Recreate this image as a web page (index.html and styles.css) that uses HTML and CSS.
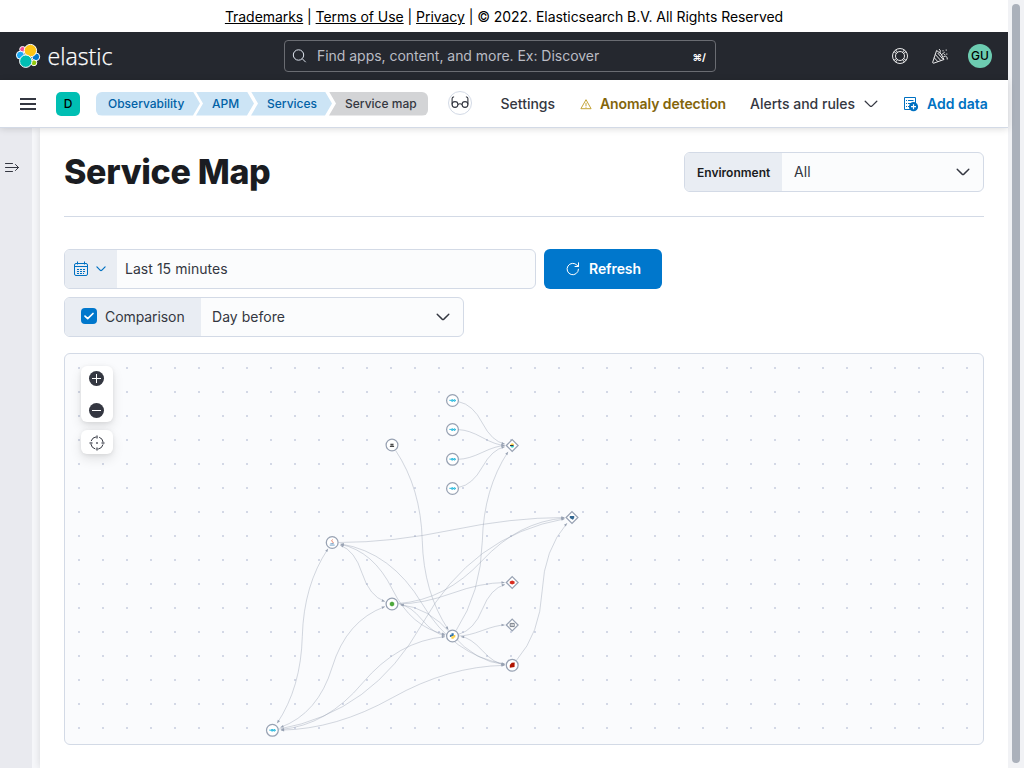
FILE: index.html
```html
<!DOCTYPE html>
<html lang="en">
<head>
<meta charset="utf-8">
<title>Service Map - APM</title>
<link rel="stylesheet" href="styles.css">
</head>
<body>
<div class="app">
  <div class="legal"><a>Trademarks</a> | <a>Terms of Use</a> | <a>Privacy</a> | © 2022. Elasticsearch B.V. All Rights Reserved</div>

  <header class="header">
    <svg class="brand" width="100" height="26" viewBox="0 0 100 26">
      <g stroke="#fff" stroke-width="1">
        <circle cx="6.6" cy="6.4" r="2.9" fill="#f04e98"/>
        <circle cx="4.4" cy="12.2" r="4" fill="#1ba9f5"/>
        <circle cx="19.8" cy="13.8" r="3.9" fill="#0077cc"/>
        <circle cx="17.9" cy="19.8" r="2.9" fill="#93c90e"/>
        <circle cx="14.4" cy="7.6" r="6.2" fill="#fec514"/>
        <circle cx="9.800" cy="18.2" r="6.2" fill="#00bfb3"/>
      </g>
      <text class="wordmark" x="31.500" y="21.500" textLength="65" lengthAdjust="spacingAndGlyphs">elastic</text>
    </svg>
    <div class="search">
      <svg width="16" height="16" viewBox="0 0 16 16" fill="none" stroke="#dfe5ef" stroke-width="1"><circle cx="6.500" cy="7" r="5.200"/><path d="M10.200 10.700l3.500 3.500"/></svg>
      <span class="search-text">Find apps, content, and more. Ex: Discover</span>
      <kbd>⌘/</kbd>
    </div>
    <div class="header-icons">
      <svg width="16" height="16" viewBox="0 0 16 16" fill="none" stroke="#fff" stroke-width=".9"><circle cx="8" cy="8" r="7.500"/><circle cx="8" cy="8" r="4.500"/><path d="M3.600 1.900l1.800 2.500M1.900 3.600l2.500 1.800M12.400 1.900l-1.800 2.500M14.100 3.600l-2.500 1.800M3.600 14.100l1.800-2.500M1.900 12.400l2.500-1.800M12.400 14.100l-1.800-2.500M14.100 12.400l-2.500-1.800"/></svg>
      <svg width="16" height="16" viewBox="0 0 16 16" fill="none" stroke="#fff" stroke-width=".9"><path d="M4.600 2.500L.7 14.200q-.1 1.100 1 1L12 11.500Q10 5 4.600 2.500zM3.300 6.500l5.500 6M2.200 9.700l3.700 4M5.700 5l5.300 6.300M7 1q2 1 1 4M9.500 6.700l3.200-2.500M11.500 8.500q2.500-1.200 3.700 1v2M11 2.200v1.200M14.200 1.500v1.200M14.800 5.500v1.200M12.700 6v1"/></svg>
      <span class="avatar">GU</span>
    </div>
  </header>

  <nav class="subheader">
    <svg class="menu" width="16" height="16" viewBox="0 0 16 16" fill="#343741"><path d="M0 2h16v2H0zM0 7h16v2H0zM0 12h16v2H0z"/></svg>
    <span class="space">D</span>
    <div class="crumbs">
      <span class="crumb first">Observability</span>
      <span class="crumb second">APM</span>
      <span class="crumb third">Services</span>
      <span class="crumb last">Service map</span>
    </div>
    <span class="badge"><svg width="18" height="14" viewBox="0 0 18 14" fill="none" stroke="#343741" stroke-width="1.100"><circle cx="4" cy="8.500" r="2.900"/><circle cx="14" cy="8.500" r="2.900"/><path d="M6.900 8.500q2.100-1.500 4.200 0M1.100 8.500V2.500q0-1.600 2-1.800M16.900 8.500V2.500q0-1.600-2-1.800"/></svg></span>
    <span class="link settings">Settings</span>
    <span class="link anomaly"><svg width="12" height="12" viewBox="0 0 12 12" fill="none" stroke="#bd9a20" stroke-width=".9"><path d="M6 1.700L11.100 10.700H.9zM6 4.800v3.200M6 8.700v1"/></svg>Anomaly detection</span>
    <span class="link alerts">Alerts and rules<svg width="14" height="8" viewBox="0 0 14 8" fill="none" stroke="#343741" stroke-width="1.300" stroke-linecap="round"><path d="M1.200 1.200l4.900 4.900q.9.700 1.800 0l4.900-4.900"/></svg></span>
    <span class="link add"><svg width="16" height="16" viewBox="0 0 16 16" fill="none" stroke="#0071c2"><path d="M7 13.500H1.500V1.500h11V7M5 4.500h5.500M5 7.500h4M5 10.500h2M3 4.500h1M3 7.500h1M3 10.500h1"/><circle cx="10.500" cy="10.700" r="4.600" fill="#0071c2" stroke="none"/><path d="M10.500 8.200v5M8 10.700h5" stroke="#fff" stroke-width="1.200"/></svg>Add data</span>
  </nav>

  <div class="body">
    <aside class="side"><svg width="16" height="12" viewBox="0 0 16 12" fill="none" stroke="#343741" stroke-linecap="round"><path d="M1.500 1.500h7M1.500 5.500h13M1.500 9.500h7M11.500 2.500l3 3-3 3"/></svg></aside>
    <main class="main">
      <div class="title-row">
        <h1>Service Map</h1>
        <div class="field env"><span class="prepend">Environment</span><span class="value">All</span><svg width="14" height="8" viewBox="0 0 14 8" fill="none" stroke="#343741" stroke-width="1.400" stroke-linecap="round"><path d="M1.200 1.200l4.900 4.900q.9.700 1.800 0l4.900-4.900"/></svg></div>
      </div>
      <div class="query-row">
        <div class="field date">
          <span class="prepend"><svg width="16" height="16" viewBox="0 0 16 16" fill="none" stroke="#0071c2"><rect x="1.500" y="2.500" width="13" height="12" rx="1.500"/><path d="M1.500 5.500h13M4.500.5v3M11.500.5v3"/><path d="M4 8.500h9M4 10.500h9M4 12.500h7" stroke-dasharray="2 1"/></svg><svg class="tick" width="10" height="6" viewBox="0 0 10 6" fill="none" stroke="#0071c2" stroke-width="1.200" stroke-linecap="round"><path d="M.9.900l3.400 3.400q.7.500 1.400 0L9.100.9"/></svg></span>
          <span class="value">Last 15 minutes</span>
        </div>
        <button class="refresh"><svg width="14" height="14" viewBox="0 0 14 14" fill="none" stroke="#fff" stroke-linecap="round"><path d="M12.500 7.200A5.700 5.700 0 1 1 11 3.200l1.500 1.300M12.500.8v3.700H9"/></svg>Refresh</button>
      </div>
      <div class="field compare">
        <span class="prepend"><span class="check"><svg width="16" height="16" viewBox="0 0 16 16" fill="none" stroke="#fff" stroke-width="1.700" stroke-linecap="round" stroke-linejoin="round"><path d="M4 8.200l2.700 2.500L12 5.500"/></svg></span>Comparison</span>
        <span class="value">Day before</span>
        <svg width="14" height="8" viewBox="0 0 14 8" fill="none" stroke="#343741" stroke-width="1.400" stroke-linecap="round"><path d="M1.200 1.200l4.900 4.900q.9.700 1.800 0l4.900-4.900"/></svg>
      </div>
      <section class="map">
        <svg id="graph" width="918" height="390" viewBox="65 354 918 390"></svg>
        <div class="controls">
          <div class="control-group">
            <svg width="16" height="16" viewBox="0 0 16 16"><circle cx="7.500" cy="8.500" r="7.500" fill="#343741"/><path d="M7.500 4v9M3 8.500h9" stroke="#fff"/></svg>
            <svg width="16" height="16" viewBox="0 0 16 16"><circle cx="7.500" cy="8.500" r="7.500" fill="#343741"/><path d="M3 8.500h9" stroke="#fff"/></svg>
          </div>
          <div class="control-group single">
            <svg width="16" height="16" viewBox="0 0 16 16" fill="none" stroke="#343741"><circle cx="8" cy="9" r="6.200" stroke-dasharray="6.740 3" stroke-dashoffset="-1.500"/><path d="M8 1.500v3M8 13.500v3M.5 9h3M12.500 9h3M7 9h2" stroke-width="2" stroke="#85878e"/></svg>
          </div>
        </div>
      </section>
    </main>
  </div>
</div>
<div class="scrollbar"><div class="thumb"></div></div>
<script src="graph.js"></script>
</body>
</html>
```
FILE: styles.css
```css
* { box-sizing: border-box; }
body { margin: 0; width: 1024px; height: 768px; overflow: hidden; display: flex; background: #fff; color: #343741; font: 14px/20px Inter, sans-serif; }
svg { display: block; flex: none; overflow: visible; }
.app { width: 1008px; height: 768px; display: flex; flex-direction: column; }
.scrollbar { width: 16px; background: #f1f2f5; padding: 4px 4px 5px; }
.thumb { height: 759px; border-radius: 4px; background: #abb1bb; }
.legal { height: 32px; line-height: 34px; text-align: center; color: #000; white-space: nowrap; letter-spacing: -.05px; }
.legal a { text-decoration: underline; }

.header { height: 48px; flex: none; background: #25282f; display: flex; align-items: center; padding: 0 16px; }
.brand { width: 100px; }
.wordmark { font: 300 24px "Open Sans", sans-serif; fill: #fff; stroke: #fff; stroke-width: .25px; }
.search { margin-left: 168px; width: 432px; height: 32px; border: 1px solid #6a6c72; border-radius: 4px; display: flex; align-items: center; padding: 0 9px 0 7px; color: #babcc4; }
.search-text { margin-left: 9px; flex: 1; letter-spacing: -.03px; }
kbd { font: 700 10px/16px Inter, "DejaVu Sans", sans-serif; color: #fff; padding-top: 2px; }
.header-icons { margin-left: auto; display: flex; align-items: center; gap: 24px; }
.avatar { margin-left: -4px; width: 24px; height: 24px; border-radius: 50%; background: #6dccb1; color: #000; font-size: 12px; font-weight: 500; line-height: 24px; text-align: center; }

.subheader { height: 48px; flex: none; display: flex; align-items: center; padding-left: 20px; background: #fff; border-bottom: 1px solid #d3dae6; box-shadow: 0 1px 7px rgba(0,0,0,.14); position: relative; z-index: 1; }
.space { margin-left: 20px; width: 24px; height: 24px; border-radius: 5px; background: #00bfb3; color: #000; font-size: 12px; font-weight: 500; line-height: 24px; text-align: center; }
.crumbs { margin-left: 16px; display: flex; }
.crumb { height: 24px; line-height: 24px; font-size: 12px; font-weight: 500; color: #0061a6; background: #cce4f5; white-space: nowrap; }
.first { width: 104px; padding-left: 12px; border-radius: 6px 0 0 6px; clip-path: polygon(0 0, 97px 0, 104px 50%, 97px 100%, 0 100%); }
.second { width: 58px; margin-left: -4px; padding-left: 16px; clip-path: polygon(0 0, 51px 0, 58px 50%, 51px 100%, 0 100%, 7px 50%); }
.third { width: 81px; margin-left: -3px; padding-left: 16px; clip-path: polygon(0 0, 74px 0, 81px 50%, 74px 100%, 0 100%, 7px 50%); }
.last { width: 99px; margin-left: -3px; padding-left: 16px; color: #343741; background: #d3d4d6; border-radius: 0 6px 6px 0; clip-path: polygon(0 0, 100% 0, 100% 100%, 0 100%, 7px 50%); }
.badge { margin: -2px 0 0 20px; width: 24px; height: 24px; border: 1px solid #d3dae6; border-radius: 50%; display: flex; align-items: center; justify-content: center; }
.link { display: flex; align-items: center; font-weight: 500; white-space: nowrap; }
.settings { margin-left: 28.500px; width: 79.500px; }
.anomaly { gap: 8px; width: 170px; color: #83650a; font-weight: 600; letter-spacing: -.08px; }
.alerts { width: 153px; gap: 9px; }
.add { gap: 8px; color: #0071c2; font-weight: 600; }

.body { flex: 1; display: flex; background: #f6f7fa; min-height: 0; }
.side { width: 32px; background: #e9eaef; padding: 34px 0 0 4px; margin-right: 8px; }
.main { width: 968px; background: #fff; box-shadow: 0 0 8px rgba(0,0,0,.13); padding: 24px 24px 0; display: flex; flex-direction: column; }
.title-row { display: flex; justify-content: space-between; height: 65px; border-bottom: 1px solid #d3dae6; }
h1 { margin: 0; font-size: 34px; line-height: 40px; font-weight: 800; letter-spacing: -.33px; color: #1a1c21; }
.field { height: 40px; border: 1px solid #d3dae6; border-radius: 6px; background: #fbfcfd; display: flex; align-items: center; overflow: hidden; }
.prepend { height: 38px; background: #e9edf3; display: flex; align-items: center; flex: none; }
.value { flex: 1; letter-spacing: .04px; }
.env { width: 300px; padding-right: 13px; }
.env .prepend { width: 97px; padding: 1px 0 0 12px; font-size: 12px; font-weight: 600; color: #1a1c21; margin-right: 12px; }
.query-row { display: flex; gap: 8px; margin-top: 32px; }
.date { width: 472px; }
.date .prepend { width: 52px; padding-left: 8px; margin-right: 8px; }
.tick { margin-left: 7px; }
.refresh { width: 118px; height: 40px; border: 0; border-radius: 6px; background: #0077cc; color: #fff; font: 600 14px/20px Inter, sans-serif; letter-spacing: -.08px; display: flex; align-items: center; justify-content: center; gap: 9px; padding: 0 0 0 1px; }
.compare { width: 400px; margin-top: 8px; padding-right: 13px; }
.compare .prepend { width: 136px; padding-left: 16px; margin-right: 11px; letter-spacing: -.08px; }
.check { width: 16px; height: 16px; border-radius: 4px; background: #0077cc; margin: -2px 8px 0 0; }
.map { margin-top: 16px; height: 392px; border: 1px solid #d3dae6; border-radius: 6px; overflow: hidden; background: #fafbfd; position: relative; }
.controls { position: absolute; left: 16px; top: 12px; display: flex; flex-direction: column; gap: 8px; }
.control-group { width: 32px; height: 56px; border-radius: 6px; background: #fff; box-shadow: 0 1px 4px rgba(0,0,0,.08), 0 5px 12px rgba(0,0,0,.1); display: flex; flex-direction: column; align-items: center; justify-content: space-between; padding: 4px 0; }
.single { height: 24px; }
```
FILE: graph.js
```js
const NODES = {
  go1: [452.5, 400.5, 'go'], go2: [452.5, 429.6, 'go'], go3: [452.5, 459.3, 'go'], go4: [452.5, 488.5, 'go'],
  rum: [392, 445, 'rum'], java: [332.2, 542.5, 'java'], node: [392, 604, 'node'], python: [452.5, 636, 'python'],
  ruby: [512.2, 665.2, 'ruby'], go5: [272.4, 730.3, 'go'],
  elastic: [512.2, 445.5, 'elastic', true], pg: [572, 517.5, 'pg', true],
  redis: [512.2, 582.5, 'redis', true], ext: [512.2, 625, 'ext', true]
};
const EDGES = [
  ['go1', 'elastic'], ['go2', 'elastic'], ['go3', 'elastic'], ['go4', 'elastic'], ['python', 'elastic'],
  ['rum', 'python'], ['java', 'pg'], ['node', 'pg'], ['ruby', 'pg'], ['go5', 'pg'],
  ['java', 'node', true], ['java', 'python', true], ['java', 'ruby', true],
  ['node', 'python', true], ['node', 'ruby', true], ['node', 'redis'],
  ['python', 'redis'], ['python', 'ext'], ['python', 'ruby', true],
  ['go5', 'java', true], ['go5', 'node', true], ['go5', 'python', true], ['go5', 'ruby', true]
];
const ICONS = {
  go: '<path d="M-3.200-.2h1.600" stroke="#00acd7" stroke-width=".8"/><ellipse cx="-.3" rx="1.100" ry=".8" fill="#7fd5eb" stroke="#00acd7" stroke-width=".8"/><ellipse cx="2" rx="1" ry=".8" fill="#7fd5eb" stroke="#00acd7" stroke-width=".8"/>',
  rum: '<path d="M-1.600-1.600h3.200v2.700h-3.200z" fill="#999"/><path d="M-1.500-.3h2.800M-2.100 1.500h4.200" stroke="#333" stroke-width=".9"/>',
  java: '<path d="M.3-3q-1.700 1.500 0 2.300t-.3 1.600" fill="none" stroke="#e76f51" stroke-width=".9"/><path d="M-1.800 1.200h3.400M-2.500 2.600h5" stroke="#6f9fc8" stroke-width=".9"/>',
  node: '<path d="M0-2.600l2.200 1.300v2.600L0 2.600l-2.200-1.300v-2.600z" fill="#4fa83d"/>',
  python: '<path d="M-1-2.800h2.200V0H-.8v1.100h-1.800v-2.400H-1z" fill="#3776ab"/><path d="M1.200-.9h1.600v2.400H1.200v1.300h-2.300V.3h2.300z" fill="#fed142"/>',
  ruby: '<path d="M-.5-2.500l3-.2-.2 4.600-4.700.7v-2.700z" fill="#b11401"/>',
  elastic: '<path d="M-1.900-.7A2.100 2.100 0 0 1 2-.7z" fill="#fec514"/><path d="M-2.200-.6h3.600V.5h-3.600z" fill="#343741"/><path d="M-1.900.7A2.100 2.100 0 0 0 2 .7z" fill="#00bfb3"/>',
  pg: '<path d="M-2.200-1.600h4.400v2L.9 2.200-.5 1.600l-1.700-1z" fill="#336791"/>',
  redis: '<path d="M-2.400-1L0-1.900 2.400-1V.9L0 1.900-2.400.9z" fill="#d82c20"/>',
  ext: '<path d="M-2-1.600h4v3.200h-4z" fill="none" stroke="#69707d" stroke-width=".9"/><path d="M-1.500 0h2.500" stroke="#69707d" stroke-width=".7"/>'
};

const toward = (from, to, dist) => {
  const len = Math.hypot(to[0] - from[0], to[1] - from[1]);
  return [from[0] + (to[0] - from[0]) * dist / len, from[1] + (to[1] - from[1]) * dist / len];
};
const arrow = (from, tip) => {
  const angle = Math.atan2(tip[1] - from[1], tip[0] - from[0]) * 180 / Math.PI;
  return `<path d="M0 0L-3.200-1.300V1.300z" fill="#98a2b3" transform="translate(${tip}) rotate(${angle})"/>`;
};

let out = '<defs><pattern id="dots" x="78" y="367" width="24" height="24" patternUnits="userSpaceOnUse"><rect width="2" height="2" fill="#d3d8e6"/></pattern></defs>';
out += '<rect x="65" y="354" width="918" height="390" fill="url(#dots)"/>';

// Each edge is an S-curve made of two quadratics that meet halfway.
for (const [a, b, both] of EDGES) {
  const p = NODES[a], q = NODES[b];
  const dx = q[0] - p[0], dy = q[1] - p[1];
  const bend = 0.25 * dy * dx / (dx * dx + dy * dy);
  const c1 = [p[0] + dx / 4 + bend * dy, p[1] + dy / 4 - bend * dx];
  const c2 = [q[0] - dx / 4 - bend * dy, q[1] - dy / 4 + bend * dx];
  const mid = [(c1[0] + c2[0]) / 2, (c1[1] + c2[1]) / 2];
  const start = toward(p, c1, both ? 8.5 : 6.5), end = toward(q, c2, 7.5);
  out += `<path d="M${start}Q${c1} ${mid}Q${c2} ${end}" fill="none" stroke="#98a2b3" stroke-opacity=".6" stroke-width=".7"/>`;
  out += arrow(c2, end);
  if (both) out += arrow(c1, start);
}
for (const [x, y, icon, diamond] of Object.values(NODES)) {
  const shape = diamond ? '<path d="M0-5.900L5.900 0 0 5.900-5.900 0z"' : '<circle r="5.900"';
  out += `<g transform="translate(${x} ${y})">${shape} fill="#fff" stroke="#98a2b3" stroke-width="1.250"/>${ICONS[icon]}</g>`;
}
document.getElementById('graph').innerHTML = out;
```
